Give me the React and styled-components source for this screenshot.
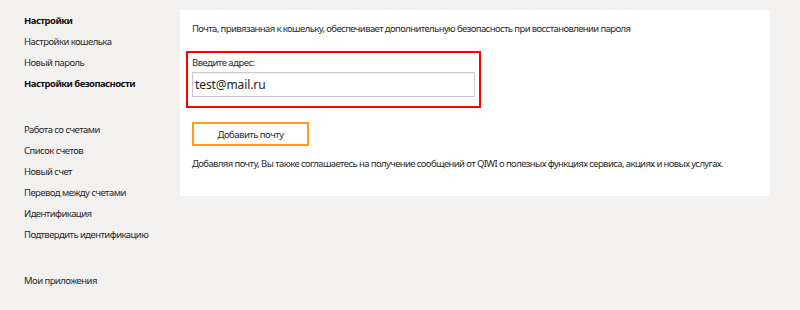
import React from "react";
import styled, { createGlobalStyle } from "styled-components";

const Global = createGlobalStyle`
  html, body { margin: 0; padding: 0; background: #f2f1f0; }
  body { font-family: "Noto Sans", "Open Sans", sans-serif; color: #2a2a2a; }
`;

const Page = styled.div`
  display: flex;
  align-items: flex-start;
  padding-top: 10px;
  width: 800px;
  height: 300px;
`;

const Sidebar = styled.nav`
  width: 156px;
  padding-left: 24px;
  display: flex;
  flex-direction: column;
  gap: 25px;
`;

const Group = styled.div`
  display: flex;
  flex-direction: column;
`;

const NavItem = styled.div`
  font-size: 9.5px;
  letter-spacing: -0.55px;
  line-height: 21px;
  height: 21px;
  white-space: nowrap;
  color: ${(p) => (p.$bold ? "#111" : "#2a2a2a")};
  font-weight: ${(p) => (p.$bold ? 700 : 400)};
`;

const Panel = styled.section`
  box-sizing: border-box;
  width: 590px;
  height: 186px;
  background: #fff;
  padding: 11px 12px 0;
  display: flex;
  flex-direction: column;
  align-items: flex-start;
`;

const Text = styled.p`
  margin: 0;
  font-size: 9.5px;
  letter-spacing: -0.6px;
  line-height: 16px;
  white-space: nowrap;
`;

const Field = styled.div`
  box-sizing: border-box;
  margin: 14px 0 0 -6px;
  width: 295px;
  height: 57px;
  border: 2px solid #f00;
  padding: 3px 4px 0;
  display: flex;
  flex-direction: column;
`;

const Label = styled.label`
  font-size: 9.5px;
  letter-spacing: -0.5px;
  line-height: 14px;
  margin-bottom: 2px;
`;

const Input = styled.div`
  box-sizing: border-box;
  width: 283px;
  height: 25px;
  border: 1px solid #ccc;
  box-shadow: inset 0 1px 1px #eee;
  padding: 0 2px;
  font-size: 12px;
  letter-spacing: -0.1px;
  line-height: 23px;
  color: #222;
`;

const Button = styled.button`
  box-sizing: border-box;
  margin-top: 14px;
  width: 117px;
  height: 24px;
  background: #fff;
  border: 2px solid #ff9b1a;
  font-family: inherit;
  font-size: 9.5px;
  letter-spacing: -0.5px;
  color: #2a2a2a;
  padding: 0;
  cursor: pointer;
`;

const Note = styled(Text)`
  margin-top: 10px;
`;

export default function App() {
  return (
    <>
      <Global />
      <Page>
        <Sidebar>
          <Group>
            <NavItem $bold>Настройки</NavItem>
            <NavItem>Настройки кошелька</NavItem>
            <NavItem>Новый пароль</NavItem>
            <NavItem $bold>Настройки безопасности</NavItem>
          </Group>
          <Group>
            <NavItem>Работа со счетами</NavItem>
            <NavItem>Список счетов</NavItem>
            <NavItem>Новый счет</NavItem>
            <NavItem>Перевод между счетами</NavItem>
            <NavItem>Идентификация</NavItem>
            <NavItem>Подтвердить идентификацию</NavItem>
          </Group>
          <Group>
            <NavItem>Мои приложения</NavItem>
          </Group>
        </Sidebar>
        <Panel>
          <Text>
            Почта, привязанная к кошельку, обеспечивает дополнительную безопасность при восстановлении пароля
          </Text>
          <Field>
            <Label>Введите адрес:</Label>
            <Input>test@mail.ru</Input>
          </Field>
          <Button>Добавить почту</Button>
          <Note>
            Добавляя почту, Вы также соглашаетесь на получение сообщений от QIWI о полезных функциях сервиса, акциях и новых услугах.
          </Note>
        </Panel>
      </Page>
    </>
  );
}
